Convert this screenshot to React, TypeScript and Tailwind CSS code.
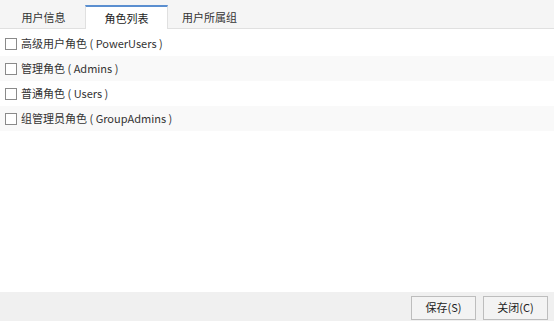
import { useState } from 'react';

const tabs = ['用户信息', '角色列表', '用户所属组'];

const roles = [
  '高级用户角色 ( PowerUsers )',
  '管理角色 ( Admins )',
  '普通角色 ( Users )',
  '组管理员角色 ( GroupAdmins )',
];

const font = { fontFamily: '"Microsoft YaHei", "Noto Sans CJK SC", "Liberation Sans", sans-serif' };

export default function App() {
  const [active, setActive] = useState(1);
  const [checked, setChecked] = useState<boolean[]>([false, false, false, false]);

  return (
    <div className="w-[554px] h-[321px] flex flex-col bg-white text-[11px] text-[#333]" style={font}>
      {/* tab bar */}
      <div className="h-[29px] flex items-end bg-[#f5f5f5] border-b border-[#e0e0e0] pl-[2px]">
        {tabs.map((tab, i) => (
          <button
            key={tab}
            onClick={() => setActive(i)}
            className={`w-[83px] h-[24px] mb-[-1px] flex items-center justify-center ${
              i === active
                ? 'bg-white border-t-2 border-[#5b8fd0] border-x border-x-[#e0e0e0] text-[#222]'
                : 'text-[#333]'
            }`}
          >
            {tab}
          </button>
        ))}
      </div>

      {/* role list */}
      <div className="flex-1 pt-[2px]">
        {roles.map((role, i) => (
          <label
            key={role}
            className={`h-[25px] flex items-center pl-[5px] cursor-pointer ${i % 2 === 1 ? 'bg-[#f9f9f9]' : ''}`}
          >
            <span
              onClick={() => setChecked(c => c.map((v, j) => (j === i ? !v : v)))}
              className="w-[12px] h-[12px] border border-[#8a8a8a] bg-white mr-[4px] flex items-center justify-center text-[9px] leading-none"
            >
              {checked[i] ? '✓' : ''}
            </span>
            <span className="whitespace-pre">{role}</span>
          </label>
        ))}
      </div>

      {/* footer */}
      <div className="h-[29px] bg-[#f0f0f0] flex items-center justify-end gap-[7px] pr-[6px] pt-[2px]">
        <button className="w-[65px] h-[24px] border border-[#bdbdbd] bg-[#f3f3f3] text-[#222]">保存(S)</button>
        <button className="w-[65px] h-[24px] border border-[#bdbdbd] bg-[#f3f3f3] text-[#222]">关闭(C)</button>
      </div>
    </div>
  );
}
